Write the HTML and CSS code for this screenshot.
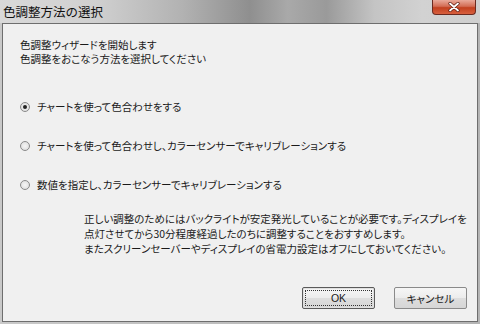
FILE: index.html
```html
<!DOCTYPE html>
<html lang="ja">
<head>
<meta charset="utf-8">
<link rel="stylesheet" href="styles.css">
</head>
<body>
<div class="window">
  <div class="titlebar">
    <span class="title">色調整方法の選択</span>
    <span class="close"><svg width="14" height="10" viewBox="0 0 14 10"><path d="M3 1.5 L11 8.5 M11 1.5 L3 8.5" stroke="#5a1a10" stroke-width="3.2" stroke-linecap="round"/><path d="M3 1.5 L11 8.5 M11 1.5 L3 8.5" stroke="#ffffff" stroke-width="1.8" stroke-linecap="round"/></svg></span>
  </div>
  <div class="client">
    <p class="intro">色調整ウィザードを開始します<br>色調整をおこなう方法を選択してください</p>
    <div class="options">
      <label class="option"><span class="radio checked"></span>チャートを使って色合わせをする</label>
      <label class="option"><span class="radio"></span>チャートを使って色合わせし、カラーセンサーでキャリブレーションする</label>
      <label class="option"><span class="radio"></span>数値を指定し、カラーセンサーでキャリブレーションする</label>
    </div>
    <p class="note">正しい調整のためにはバックライトが安定発光していることが必要です。ディスプレイを<br>点灯させてから30分程度経過したのちに調整することをおすすめします。<br>またスクリーンセーバーやディスプレイの省電力設定はオフにしておいてください。</p>
    <div class="buttons">
      <span class="btn default"><span class="focus">OK</span></span>
      <span class="btn">キャンセル</span>
    </div>
  </div>
</div>
</body>
</html>
```
FILE: styles.css
```css
html, body {
  margin: 0;
  padding: 0;
}
body {
  width: 480px;
  height: 324px;
  overflow: hidden;
  font-family: "Noto Sans CJK JP", "Noto Sans", sans-serif;
  font-size: 10.5px;
  font-feature-settings: "palt";
  color: #1a1a1a;
}
.window {
  width: 480px;
  height: 324px;
  box-sizing: border-box;
  background: linear-gradient(90deg, #c9c9c9 0%, #bdbdbd 50%, #b4b4b4 100%);
  padding: 0 2px 2px 2px;
  display: flex;
  flex-direction: column;
}
.titlebar {
  height: 23px;
  display: flex;
  align-items: flex-start;
  justify-content: space-between;
  margin: 0 -2px;
  padding: 0 2px 0 3px;
  background: linear-gradient(90deg, #d9d9d9 0%, #d0d0d0 20%, #b2b2b2 38%, #8f8f8f 52%, #a9a9a9 60%, #9a9a9a 68%, #c4c4c4 78%, #d2d2d2 88%, #cfcfcf 100%);
}
.title {
  font-size: 12.5px;
  line-height: 15px;
  padding-top: 4px;
  color: #111;
  font-feature-settings: normal;
}
.close {
  width: 44px;
  height: 15px;
  margin-right: 2px;
  box-sizing: border-box;
  border: 1px solid #6b2a20;
  border-top: none;
  border-radius: 0 0 4px 4px;
  background: linear-gradient(180deg, #e9a99a 0%, #d36d55 45%, #c2401f 55%, #d8603f 100%);
  display: flex;
  align-items: center;
  justify-content: center;
}
.client {
  flex: 1;
  background: #f0f0f0;
  border: 1px solid #6e6e6e;
  box-sizing: border-box;
  padding: 14px 10px 12px 17px;
  display: flex;
  flex-direction: column;
}
.intro {
  margin: 0;
  line-height: 14px;
}
.options {
  display: flex;
  flex-direction: column;
  gap: 25px;
  margin-top: 34px;
}
.option {
  display: flex;
  align-items: center;
  height: 14px;
  line-height: 14px;
}
.radio {
  width: 10px;
  height: 10px;
  box-sizing: border-box;
  border-radius: 50%;
  border: 1px solid #8a8a8a;
  background: radial-gradient(circle, #f6f6f6 0%, #d8d8d8 100%);
  margin: 0 7px 0 0;
  position: relative;
}
.radio.checked::after {
  content: "";
  position: absolute;
  left: 2px;
  top: 2px;
  width: 4px;
  height: 4px;
  border-radius: 50%;
  background: #222;
}
.note {
  margin: 19px 0 0 64px;
  line-height: 15px;
  white-space: nowrap;
}
.buttons {
  margin-top: auto;
  display: flex;
  justify-content: flex-end;
  gap: 19px;
}
.btn {
  width: 73px;
  height: 22px;
  box-sizing: border-box;
  border: 1px solid #8a8a8a;
  border-radius: 2px;
  background: linear-gradient(180deg, #f6f6f6 0%, #ececec 50%, #dedede 51%, #d6d6d6 100%);
  display: flex;
  align-items: center;
  justify-content: center;
  font-size: 10.5px;
}
.btn.default {
  border: 1px solid #5a5a5a;
  box-shadow: inset 0 0 0 1px #e0e0e0;
  padding: 2px;
}
.focus {
  flex: 1;
  align-self: stretch;
  border: 1px dotted #333;
  display: flex;
  align-items: center;
  justify-content: center;
  font-family: "Liberation Sans", sans-serif;
  font-size: 10.5px;
}
```
